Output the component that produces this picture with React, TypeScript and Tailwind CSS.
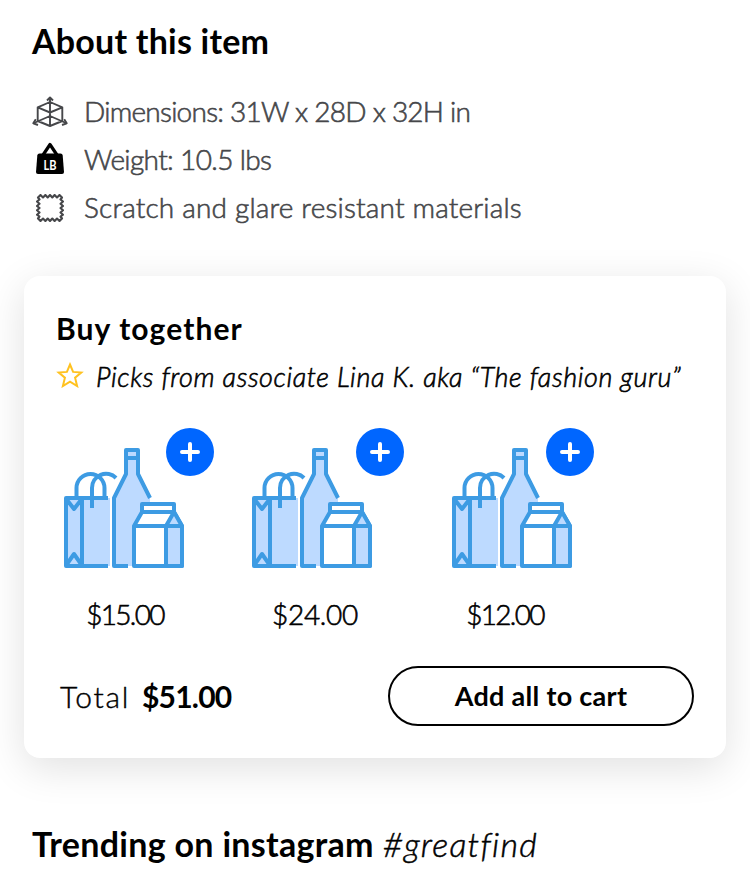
import type { ReactNode } from "react";

const font = "font-['Lato','Open_Sans',sans-serif]";

function CubeIcon() {
  return (
    <svg width="36" height="32" viewBox="0 0 36 32" fill="none" stroke="#46474a" strokeWidth="1.9" strokeLinejoin="round">
      <path d="M18 7 30.300 12.300V26L18 31 5.700 26V12.300ZM5.700 12.300 18 17.500l12.300-5.200M18 3v28M18 21 2 28M18 21l16 7" />
      <path d="M15 5.500 18 2.500l3 3M3.800 24.200 1.300 28.300 6 30M32.200 24.200l2.500 4.100L30 30" />
    </svg>
  );
}

function WeightIcon() {
  return (
    <svg className="mb-0.5" width="28" height="32" viewBox="0 0 28 32">
      <path d="M7 13 14 2.500 21 13" fill="none" stroke="#000" strokeWidth="3.200" strokeLinejoin="round" />
      <path d="M3.500 11.500h21q2 0 2.200 2L28 30q0 2-2 2H2q-2 0-2-2l1.300-16.500q.2-2 2.200-2Z" />
      <text x="14" y="27.500" textAnchor="middle" fill="#fff" fontSize="13" fontWeight="700" fontFamily="Lato, sans-serif" textLength="13" lengthAdjust="spacingAndGlyphs">LB</text>
    </svg>
  );
}

function SwatchIcon() {
  return (
    <svg className="mt-0.5" width="28" height="28" viewBox="0 0 28 28" fill="none" stroke="#46474a" strokeWidth="2.100" strokeLinejoin="round">
      <path d="M2 3.500 4.500 1 7 3.500 9.400 1l2.300 2.500L14 1l2.300 2.500L18.600 1 21 3.500 23.500 1 26 3.500 24.500 5.500 27 7.500 24.500 9.700 27 12 24.500 14 27 16.300 24.500 18.500 27 20.700 24.500 22.500 26 24.500 23.500 27 21 24.500 18.600 27l-2.300-2.500L14 27l-2.300-2.500L9.400 27 7 24.500 4.500 27 2 24.500 3.500 22.500 1 20.700 3.500 18.500 1 16.300 3.500 14 1 12 3.500 9.700 1 7.500 3.500 5.500Z" />
    </svg>
  );
}

function Groceries() {
  return (
    <svg width="120" height="120" viewBox="0 0 120 120" fill="none" stroke="#3d9be3" strokeWidth="4" strokeLinejoin="round">
      <path d="M2 50h44v68H2Z" fill="#bddaff" stroke="none" />
      <path d="M50 118V50L62 26V2h12v24l12 24v68Z" fill="#bddaff" stroke="none" />
      <path d="M44 50H2v68h42M18 50v68M3 52l7 9 7-9M3 116l7-10 7 10" />
      <path d="M12.500 50V40a14 14 0 0 1 28 0v10M28 60V40a14 14 0 0 1 24-10" />
      <path d="M64 118H50V50L62 26V2h12v24l12 24M62 10h12" />
      <path d="M70 78 78 64V56h32v8l8 14v40H70Z" fill="#fff" />
      <path d="m110 64 8 14v40h-16V78Z" fill="#bddaff" />
      <path d="M78 64h32M70 78h48" />
    </svg>
  );
}

function Detail({ icon, children, className }: { icon: ReactNode; children: ReactNode; className: string }) {
  return (
    <li className="flex h-12 items-center">
      <span className="flex w-9 shrink-0 justify-center">{icon}</span>
      <span className={`ml-4 whitespace-nowrap pt-px text-[28px] font-light leading-[47px] text-[#46474a] [-webkit-text-stroke:0.6px_#46474a] ${className}`}>{children}</span>
    </li>
  );
}

function Product({ price, inset, tracking }: { price: string; inset: string; tracking: string }) {
  return (
    <div className="relative w-[190px]">
      <div className={`pt-5 ${inset}`}>
        <Groceries />
      </div>
      <button aria-label="Add item" className="absolute left-[110px] top-0 flex size-12 items-center justify-center rounded-full bg-[#0066ff]">
        <svg width="20" height="20" viewBox="0 0 20 20" stroke="#fff" strokeWidth="4" strokeLinecap="round">
          <path d="M10 2v16M2 10h16" />
        </svg>
      </button>
      <p className={`mt-7 w-[138px] text-center text-[28px] font-light leading-9 [-webkit-text-stroke:0.6px_#000] ${tracking}`}>{price}</p>
    </div>
  );
}

export default function App() {
  return (
    <main className={`h-[884px] w-[750px] overflow-hidden bg-white pt-[21px] text-black ${font}`}>
      <h1 className="ml-8 whitespace-nowrap text-[34px] font-bold leading-10 tracking-[0.22px]">About this item</h1>
      <ul className="ml-8 mt-[26px]">
        <Detail icon={<CubeIcon />} className="tracking-[-0.75px]">Dimensions: 31W x 28D x 32H in</Detail>
        <Detail icon={<WeightIcon />} className="tracking-[-0.65px]">Weight: 10.5 lbs</Detail>
        <Detail icon={<SwatchIcon />} className="tracking-[0.18px]">Scratch and glare resistant materials</Detail>
      </ul>

      <section className="mx-6 mt-[45px] h-[482px] rounded-2xl bg-white px-8 pt-7 shadow-[0_10px_40px_rgba(0,0,0,0.12)]">
        <h2 className="whitespace-nowrap text-[30px] font-bold leading-[48px] tracking-[1.1px]">Buy together</h2>
        <p className="flex h-12 items-center">
          <svg className="mb-0.5 shrink-0" width="28" height="26" viewBox="0 0 28 26" fill="none" stroke="#ffc220" strokeWidth="2">
            <path d="m14 2.500 3.100 7.400 8.200.6-6.200 5.200 2 8.300-7.100-4.400L6.900 24l2-8.300-6.200-5.200 8.200-.6Z" />
          </svg>
          <span className="ml-3 whitespace-nowrap pt-px text-[27px] font-light italic leading-[47px] tracking-[0.6px] [-webkit-text-stroke:0.6px_#000]">Picks from associate Lina K. aka “The fashion guru”</span>
        </p>
        <div className="mt-7 flex">
          <Product price="$15.00" inset="pl-2" tracking="tracking-[-1.7px]" />
          <Product price="$24.00" inset="pl-1.5" tracking="tracking-[-0.3px]" />
          <Product price="$12.00" inset="pl-4" tracking="tracking-[-1.7px]" />
        </div>
        <div className="mt-[34px] flex h-[60px] items-center justify-between">
          <p className="ml-1 flex whitespace-nowrap text-[30px]">
            <span className="w-[82px] font-light tracking-[1.7px] [-webkit-text-stroke:0.4px_#000]">Total</span>
            <strong className="tracking-[-0.8px]">$51.00</strong>
          </p>
          <button className="h-[60px] w-[306px] rounded-full border-2 border-black text-[27px] font-bold tracking-[0.3px]">Add all to cart</button>
        </div>
      </section>

      <h2 className="ml-8 mt-[66px] flex whitespace-nowrap text-[34px] leading-10">
        <span className="w-[351px] font-bold tracking-[0.3px]">Trending on instagram</span>
        <span className="font-light italic tracking-[1.2px] [-webkit-text-stroke:0.5px_#000]">#greatfind</span>
      </h2>
    </main>
  );
}
